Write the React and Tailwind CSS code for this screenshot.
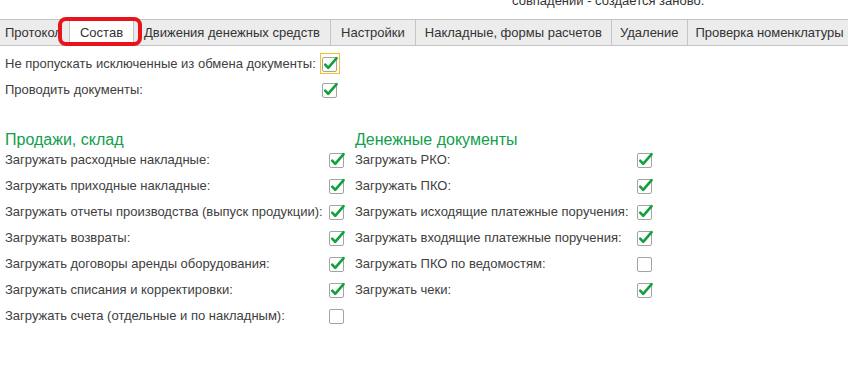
import React from "react";

const tabs = [
  { label: "Протокол", width: "w-[70px] pl-[5px]" },
  { label: "Состав", width: "w-[64px] justify-center bg-white -mb-px", active: true },
  { label: "Движения денежных средств", width: "px-[10px]" },
  { label: "Настройки", width: "px-[10px]" },
  { label: "Накладные, формы расчетов", width: "px-[9px]" },
  { label: "Удаление", width: "px-[8px]" },
  { label: "Проверка номенклатуры", width: "pl-[8px] tracking-[-0.05px]" },
];

const salesRows = [
  { label: "Загружать расходные накладные:", checked: true },
  { label: "Загружать приходные накладные:", checked: true },
  { label: "Загружать отчеты производства (выпуск продукции):", checked: true },
  { label: "Загружать возвраты:", checked: true },
  { label: "Загружать договоры аренды оборудования:", checked: true },
  { label: "Загружать списания и корректировки:", checked: true },
  { label: "Загружать счета (отдельные и по накладным):", checked: false },
];

const moneyRows = [
  { label: "Загружать РКО:", checked: true },
  { label: "Загружать ПКО:", checked: true },
  { label: "Загружать исходящие платежные поручения:", checked: true },
  { label: "Загружать входящие платежные поручения:", checked: true },
  { label: "Загружать ПКО по ведомостям:", checked: false },
  { label: "Загружать чеки:", checked: true },
];

function CheckBox({ checked, focused }) {
  return (
    <div className="relative w-[15px] h-[15px]">
      {focused && (
        <span className="absolute left-[-2px] top-[-4px] w-[20px] h-[21px] border border-[#f2c31d]" />
      )}
      <div className="w-[15px] h-[15px] border border-[#a3a3a3] rounded-[2px] bg-white" />
      {checked && (
        <svg
          className="absolute left-0 top-0 overflow-visible"
          width="15"
          height="15"
          viewBox="0 0 15 15"
        >
          <path
            d="M3.2 7.6 L6.2 10.8 L14.6 1.2"
            fill="none"
            stroke="#12a03e"
            strokeWidth="2.6"
            strokeLinecap="round"
            strokeLinejoin="round"
          />
        </svg>
      )}
    </div>
  );
}

function Row({ label, checked, labelWidth, focused }) {
  return (
    <div className="flex items-center h-[26px]">
      <span className="shrink-0 whitespace-nowrap" style={{ width: labelWidth }}>
        {label}
      </span>
      <CheckBox checked={checked} focused={focused} />
    </div>
  );
}

export default function App() {
  return (
    <div
      className="w-[848px] h-[377px] bg-white overflow-hidden text-[13px] text-[#404040]"
      style={{ fontFamily: '"Liberation Sans", Arial, sans-serif' }}
    >
      {/* header note, cut off at the top */}
      <div className="h-[19px] overflow-hidden">
        <div className="ml-[512px] -mt-[7px] leading-[15px] text-[#333]">
          совпадении - создается заново.
        </div>
      </div>

      {/* tabs */}
      <div className="relative flex h-[27px] bg-[#ececec] border-t border-b border-[#c4c4c4]">
        {tabs.map((t, i) => (
          <div
            key={t.label}
            className={`flex items-center shrink-0 whitespace-nowrap text-[#333] ${
              i < tabs.length - 1 ? "border-r border-[#c4c4c4]" : ""
            } ${t.width}`}
          >
            {t.label}
          </div>
        ))}
        <span className="absolute left-[58px] top-[-3px] w-[84px] h-[29px] border-[4px] border-[#e8141c] rounded-[8px]" />
      </div>

      {/* top options */}
      <div className="pl-[5px] mt-[5px]">
        <Row
          label="Не пропускать исключенные из обмена документы:"
          checked
          focused
          labelWidth={317}
        />
        <Row label="Проводить документы:" checked labelWidth={317} />
      </div>

      {/* sections */}
      <div className="flex pl-[5px] mt-[25px]">
        <div className="w-[350px]">
          <div className="h-[19px] leading-[23px] text-[16px] text-[#10a04c]">
            Продажи, склад
          </div>
          {salesRows.map((r) => (
            <Row key={r.label} label={r.label} checked={r.checked} labelWidth={324} />
          ))}
        </div>
        <div>
          <div className="h-[19px] leading-[23px] text-[16px] text-[#10a04c]">
            Денежные документы
          </div>
          {moneyRows.map((r) => (
            <Row key={r.label} label={r.label} checked={r.checked} labelWidth={282} />
          ))}
        </div>
      </div>
    </div>
  );
}
